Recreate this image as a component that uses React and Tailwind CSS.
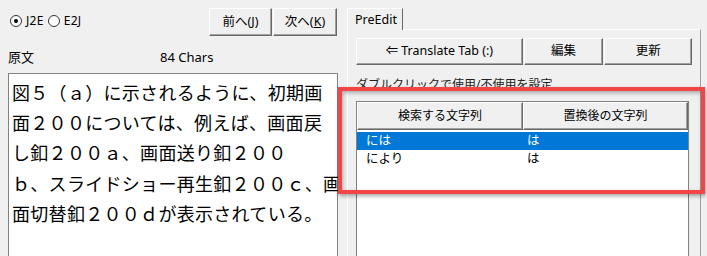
import React from 'react';

const ui = "font-['Noto_Sans','Noto_Sans_CJK_JP',sans-serif]";

const WinButton = ({ children, className = '' }) => (
  <div
    className={`flex items-center justify-center bg-[#f0f0f0] border border-t-white border-l-white border-b-[#696969] border-r-[#696969] shadow-[inset_-1px_-1px_0_#a0a0a0] text-[12.5px] text-[#000] ${className}`}
  >
    {children}
  </div>
);

const Radio = ({ checked, label }) => (
  <div className="flex items-center gap-[4px]">
    <div className="w-[12px] h-[12px] rounded-full bg-white border border-[#333] flex items-center justify-center">
      {checked && <div className="w-[4px] h-[4px] rounded-full bg-black" />}
    </div>
    <span className="text-[12px] leading-[14px] tracking-[0.3px]">{label}</span>
  </div>
);

const lines = [
  '図５（ａ）に示されるように、初期画',
  '面２００については、例えば、画面戻',
  'し釦２００ａ、画面送り釦２００',
  'ｂ、スライドショー再生釦２００ｃ、画',
  '面切替釦２００ｄが表示されている。',
];

const rules = [
  { from: 'には', to: 'は', selected: true },
  { from: 'により', to: 'は', selected: false },
];

export default function App() {
  return (
    <div className={`relative w-[707px] h-[256px] overflow-hidden bg-[#f0f0f0] text-black ${ui}`}>
      <div className="flex h-full">
        {/* Left: source text */}
        <div className="w-[347px] shrink-0 pl-2 pr-[9px]">
          <div className="flex items-start justify-between pt-2">
            <div className="flex items-center gap-[4px] pt-[6px] pl-[2px]">
              <Radio checked label="J2E" />
              <Radio label="E2J" />
            </div>
            <div className="flex gap-px pr-px">
              <WinButton className="w-[63px] h-[28px]">
                前へ(<span className="underline">J</span>)
              </WinButton>
              <WinButton className="w-[64px] h-[28px]">
                次へ(<span className="underline">K</span>)
              </WinButton>
            </div>
          </div>

          <div className="flex mt-[14px] h-[14px] text-[13px] leading-[14px]">
            <span className="w-[152px]">原文</span>
            <span>84 Chars</span>
          </div>

          <div className="mt-[9px] h-[200px] bg-white border border-[#828282] pl-[3px] pt-[3px]">
            {lines.map((l) => (
              <div
                key={l}
                className="whitespace-nowrap text-[18px] leading-[30.2px] tracking-[0.3px] font-['Noto_Sans_CJK_JP',sans-serif]"
              >
                {l}
              </div>
            ))}
          </div>
        </div>

        {/* Right: PreEdit tab */}
        <div className="w-[354px] shrink-0 pt-2 flex flex-col">
          <div className="w-[56px] h-[23px] -mb-px relative z-10 bg-[#f0f0f0] border border-b-0 border-t-white border-l-white border-r-[#696969] text-[12.5px] leading-[20px] pl-[7px] pt-px">
            PreEdit
          </div>
          <div className="flex-1 border border-t-white border-l-white border-r-[#a0a0a0] border-b-0 px-2 pt-2">
            <div className="flex gap-px">
              <WinButton className="w-[167px] h-[27px]">⇐ Translate Tab (:)</WinButton>
              <WinButton className="w-[80px] h-[27px]">編集</WinButton>
              <WinButton className="w-[88px] h-[27px]">更新</WinButton>
            </div>

            <div className="mt-[13px] h-[14px] text-[12px] leading-[14px] text-[#222]">
              ダブルクリックで使用/不使用を設定
            </div>

            <div className="mt-[9px] w-[333px] h-[200px] bg-white border border-[#828282]">
              <div className="flex h-[28px]">
                <div className="w-[166px] flex items-center justify-center bg-[#f0f0f0] border border-t-white border-l-white border-b-[#696969] border-r-[#696969] shadow-[inset_-1px_-1px_0_#a0a0a0] text-[12px]">
                  検索する文字列
                </div>
                <div className="w-[165px] flex items-center justify-center bg-[#f0f0f0] border border-t-white border-l-white border-b-[#696969] border-r-[#696969] shadow-[inset_-1px_-1px_0_#a0a0a0] text-[12px]">
                  置換後の文字列
                </div>
              </div>
              <div className="pt-[2px]">
                {rules.map((r) => (
                  <div
                    key={r.from}
                    className={`flex h-[18px] items-center text-[12.5px] ${
                      r.selected ? 'bg-[#0078d7] text-white' : 'text-black'
                    }`}
                  >
                    <span className="w-[170px] pl-[9px]">{r.from}</span>
                    <span>{r.to}</span>
                  </div>
                ))}
              </div>
            </div>
          </div>
        </div>
      </div>

      {/* Highlight box drawn over the list */}
      <div className="absolute left-[338px] top-[87px] w-[367px] h-[107px] border-4 border-[#f34545] shadow-[1px_2px_4px_rgba(0,0,0,0.35),inset_1px_2px_4px_rgba(0,0,0,0.3)] pointer-events-none" />
    </div>
  );
}
